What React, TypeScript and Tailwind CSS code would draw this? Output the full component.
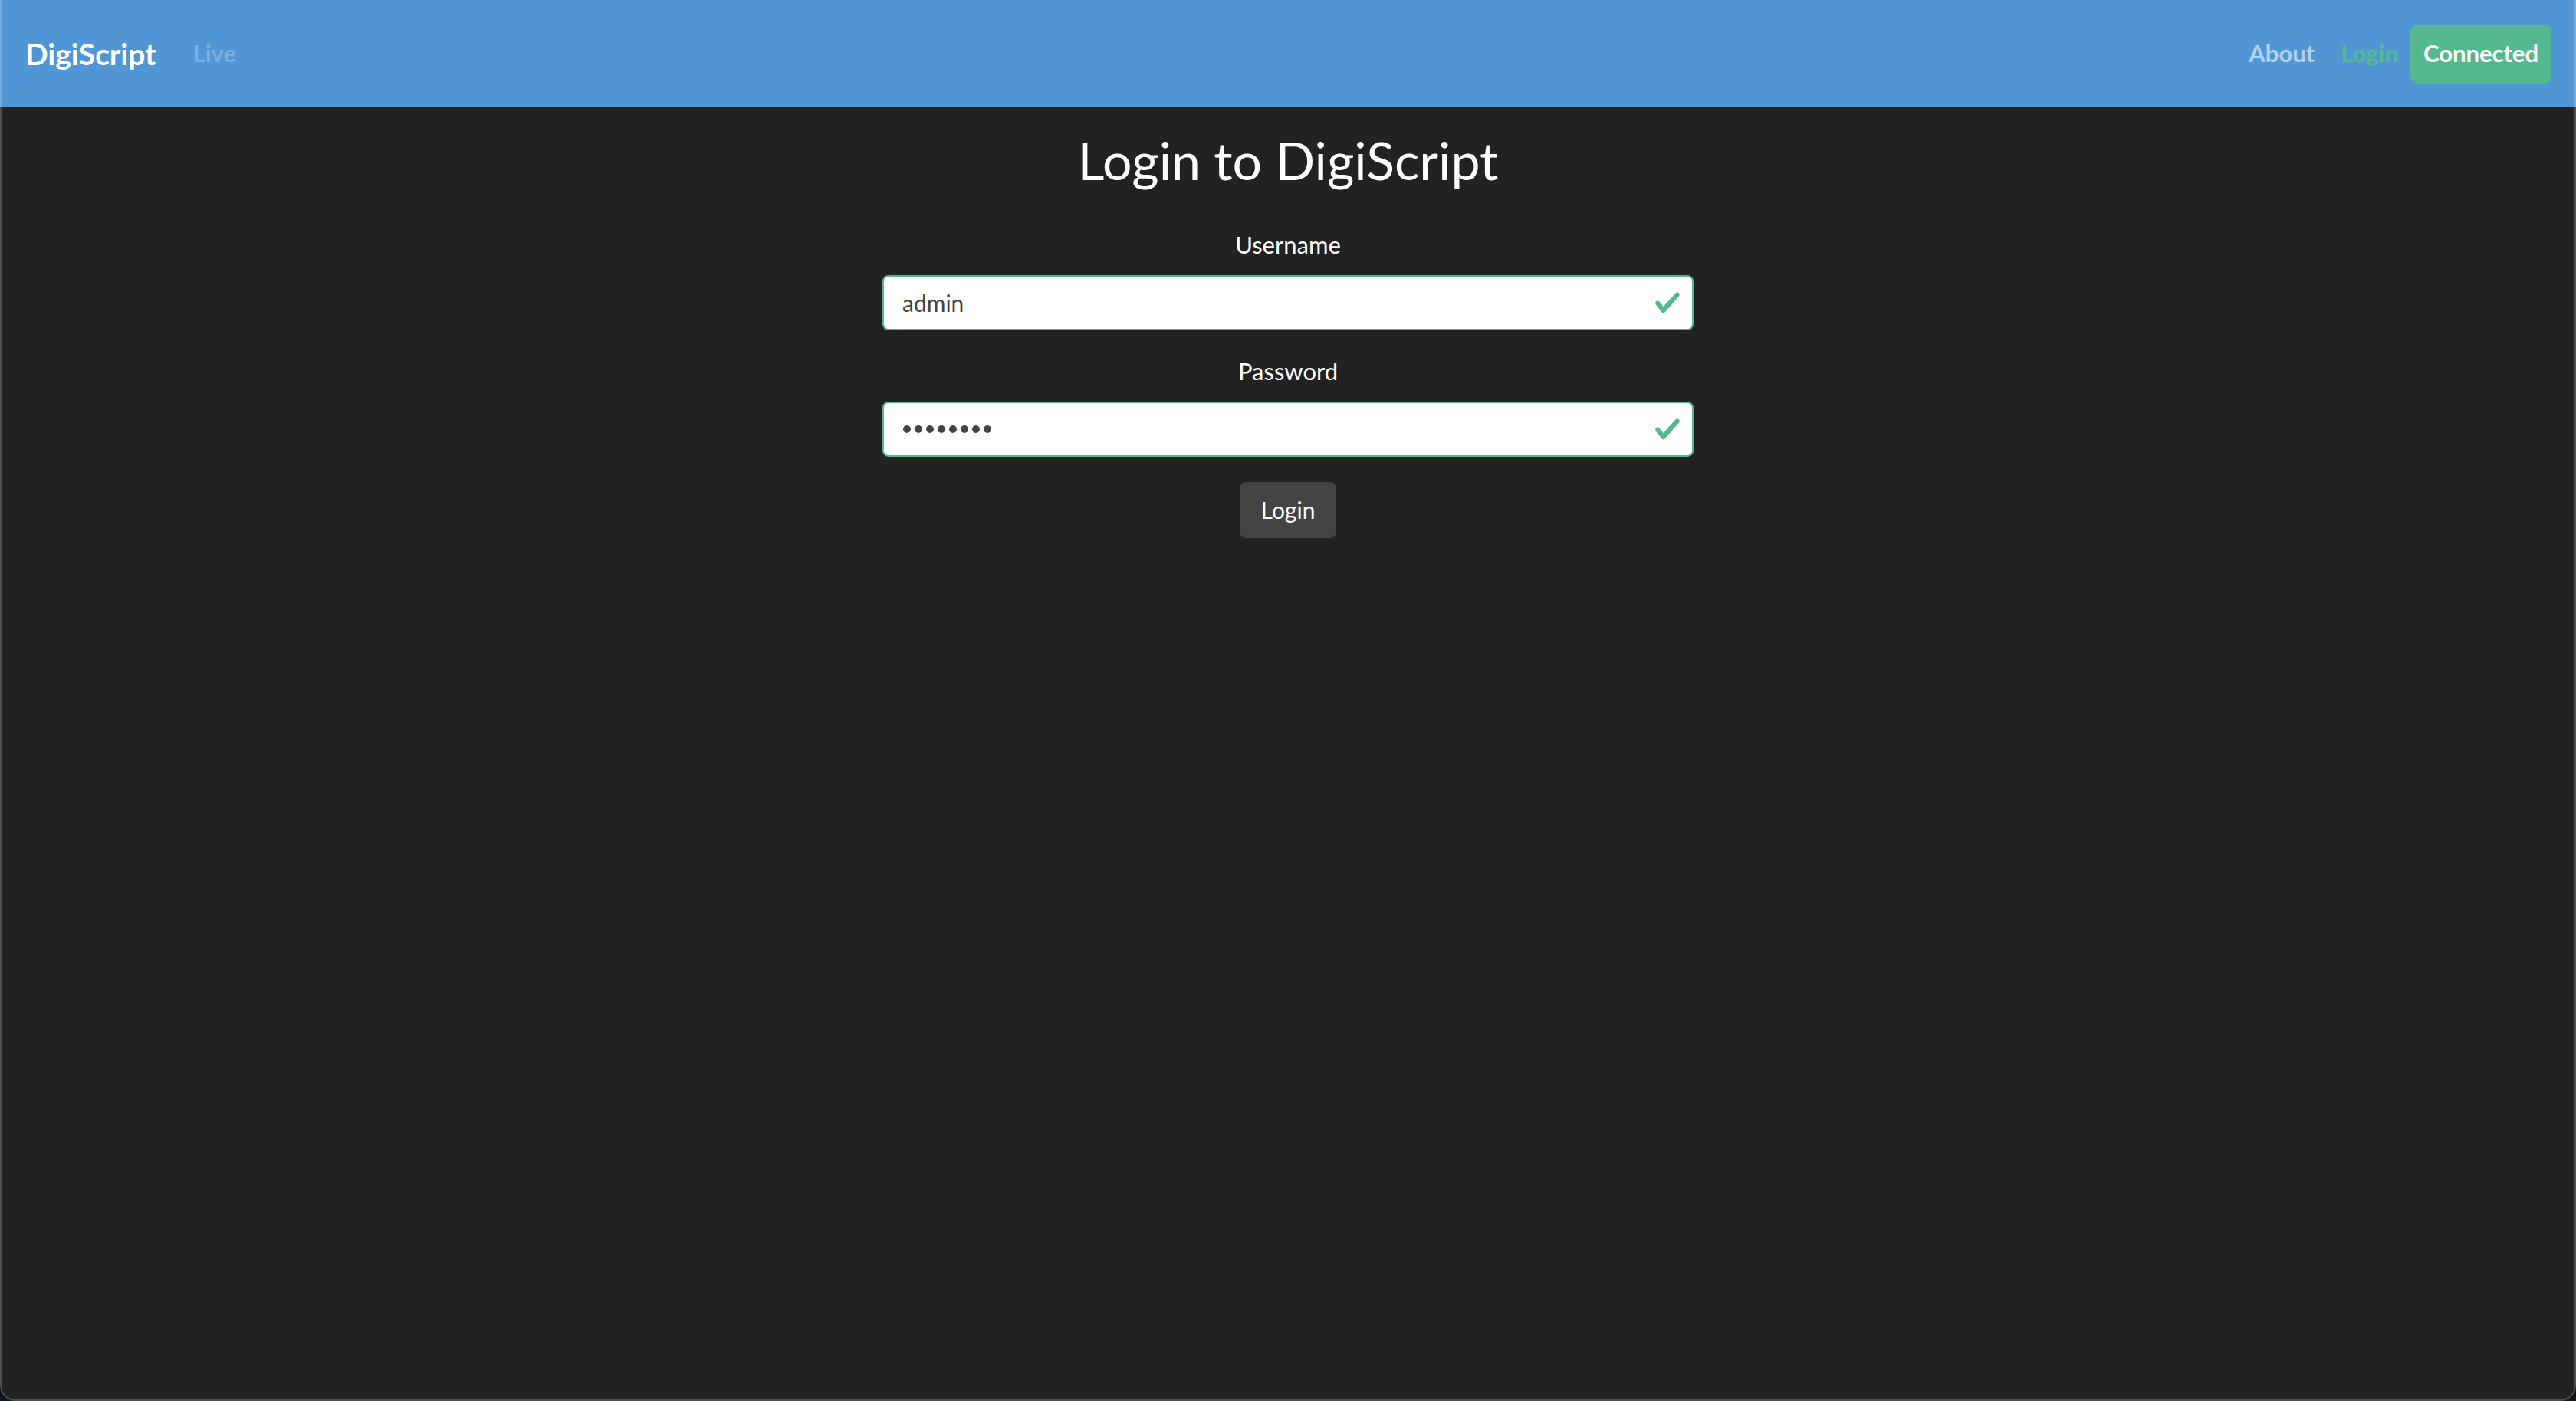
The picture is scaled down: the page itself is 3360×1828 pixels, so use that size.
import React from "react";

function Check() {
  return (
    <svg
      viewBox="0 0 8 8"
      className="absolute right-[16px] top-1/2 -translate-y-1/2 w-[36px] h-[36px]"
    >
      <path
        fill="#55b98f"
        d="M2.3 6.73L.6 4.53c-.4-1.04.46-1.4 1.1-.8l1.1 1.4 3.4-3.8c.6-.63 1.6-.27 1.2.7l-4 4.6c-.43.5-.8.4-1.1.1z"
      />
    </svg>
  );
}

export default function App() {
  return (
    <div className="h-screen w-full bg-[#0c1722] font-['Lato',sans-serif]">
      <div className="relative h-full w-full overflow-hidden rounded-b-[20px] bg-[#222222] flex flex-col">
        <nav className="h-[140px] shrink-0 bg-[#5096d4] flex items-center justify-between pl-[33px] pr-[32px]">
          <div className="flex items-center">
            <span className="text-[39px] leading-[1.2] font-bold text-white">DigiScript</span>
            <span className="ml-[48px] text-[31px] leading-[1.2] font-bold text-white/25">Live</span>
          </div>
          <div className="flex items-center">
            <span className="text-[31px] leading-[1.2] font-bold text-white/55">About</span>
            <span className="ml-[34px] text-[31px] leading-[1.2] font-bold text-[#55b98f]">Login</span>
            <span className="ml-[16px] h-[77px] px-[17px] flex items-center rounded-[10px] bg-[#55b98f] text-[31px] leading-[1.2] font-bold text-white">
              Connected
            </span>
          </div>
        </nav>
        <main className="flex flex-col items-center">
          <h1 className="mt-[28px] text-[68px] leading-[1.2] font-normal text-white">Login to DigiScript</h1>
          <form className="w-[1058px] flex flex-col items-center">
            <label className="mt-[51px] text-[31px] leading-[1.2] text-white">Username</label>
            <div className="relative mt-[21px] w-full h-[72px]">
              <input
                readOnly
                defaultValue="admin"
                className="w-full h-full rounded-[8px] border-2 border-[#55b98f] bg-white pl-[24px] pr-[64px] text-[30px] text-[#444444] outline-none font-['Lato',sans-serif]"
              />
              <Check />
            </div>
            <label className="mt-[35px] text-[31px] leading-[1.2] text-white">Password</label>
            <div className="relative mt-[21px] w-full h-[72px]">
              <div className="w-full h-full rounded-[8px] border-2 border-[#55b98f] bg-white pl-[25px] flex items-center gap-[5px]">
                {Array.from({ length: 8 }).map((_, i) => (
                  <span key={i} className="block w-[10px] h-[10px] rounded-full bg-[#444444]" />
                ))}
              </div>
              <Check />
            </div>
            <button
              type="button"
              className="mt-[33px] h-[73px] px-[28px] rounded-[8px] bg-[#444444] text-[30px] leading-[1.2] text-white"
            >
              Login
            </button>
          </form>
        </main>
        <div className="pointer-events-none absolute inset-0 rounded-b-[20px] border-x-2 border-b-2 border-white/20" />
      </div>
    </div>
  );
}
